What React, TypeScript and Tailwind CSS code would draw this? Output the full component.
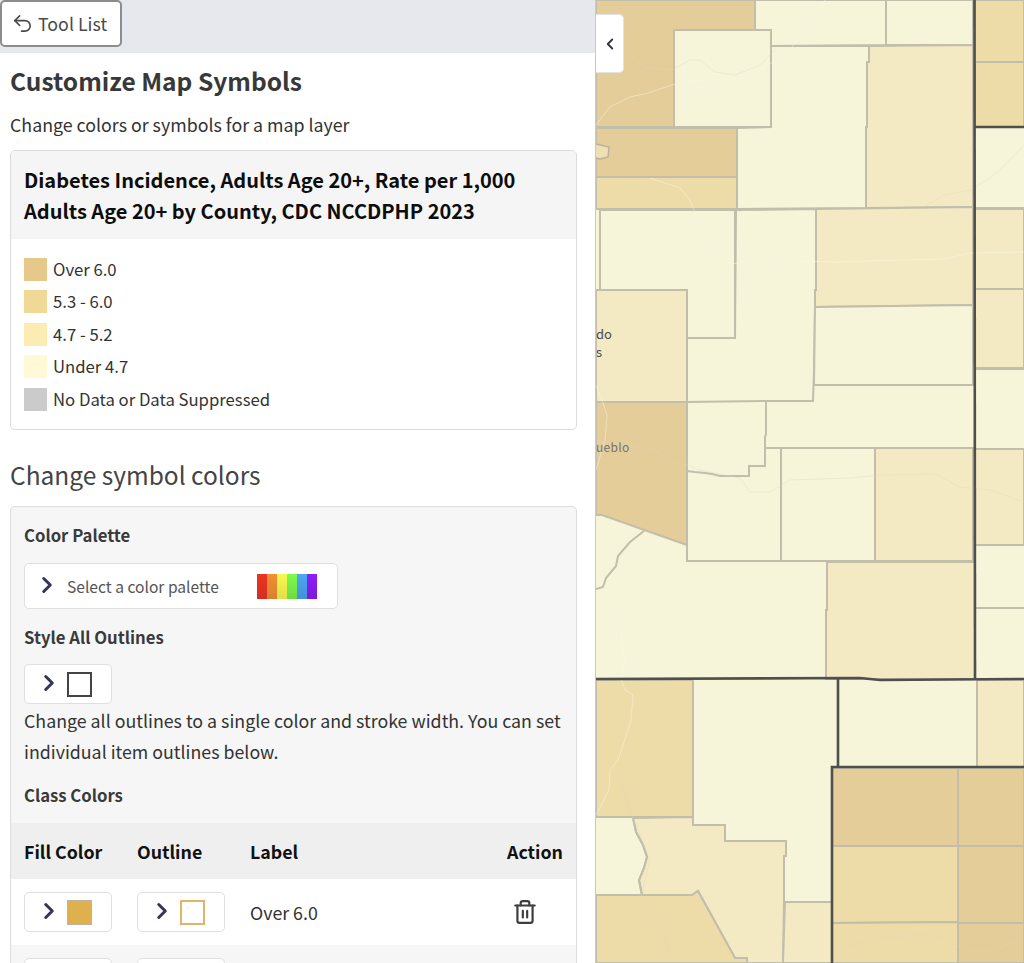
import { ChevronLeft, ChevronRight, Trash2, Undo2 } from "lucide-react";

const DARK = "#e5cd9a";
const MED = "#eddca8";
const LIGHT = "#f3eac4";
const PALE = "#f6f4d9";
const LINE = "#c2beaa";

const regions: [string, string][] = [
  [DARK, "596,0 755,0 755,30 674,30 674,127 596,127"],
  [PALE, "674,30 771,30 771,127 674,127"],
  [DARK, "596,128 737,128 737,177 596,177"],
  [MED, "596,177 737,177 737,209 596,209"],
  [PALE, "755,0 886,0 886,45 771,46 771,30 755,30"],
  [PALE, "886,0 973,0 973,45 886,45"],
  [PALE, "771,46 869,46 869,62 867,62 867,127 866,127 866,208 737,209 737,128 771,127"],
  [LIGHT, "869,46 973,45 973,207 866,208 866,127 867,127 867,62 869,62"],
  [MED, "975,0 1024,0 1024,62 975,62"],
  [MED, "975,62 1024,62 1024,127 975,127"],
  [LIGHT, "975,209 1024,209 1024,289 975,289"],
  [LIGHT, "975,289 1024,289 1024,369 975,369"],
  [LIGHT, "975,449 1024,449 1024,545 975,545"],
  [PALE, "600,210 735,210 735,338 687,338 687,290 600,290"],
  [PALE, "736,210 816,209 816,290 815,307 814,370 813,401 766,401 687,402 687,338 735,338"],
  [LIGHT, "596,290 687,290 687,402 596,402"],
  [LIGHT, "816,209 973,207 973,305 815,307 815,290 816,290"],
  [PALE, "815,307 973,305 973,385 814,385"],
  [DARK, "596,402 687,402 687,545 602,515 596,515"],
  [LIGHT, "875,448 973,448 973,561 875,561"],
  [LIGHT, "827,562 975,562 975,679 826,679 826,610 827,610"],
  [MED, "596,680 693,680 693,817 596,817"],
  [LIGHT, "977,680 1024,680 1024,767 977,767"],
  [DARK, "832,768 958,768 958,846 832,846"],
  [DARK, "958,768 1024,768 1024,846 958,846"],
  [MED, "832,846 958,846 958,922 832,923"],
  [DARK, "958,846 1024,846 1024,923 958,923"],
  [MED, "832,923 958,922 958,963 832,963"],
  [DARK, "958,923 1024,923 1024,963 958,963"],
  [LIGHT, "633,818 693,817 693,825 725,825 725,841 786,841 786,856 784,856 784,902 783,963 747,963 747,958 735,958 698,891 692,895 642,895 639,880 644,868 647,857 643,845 636,832"],
  [MED, "596,895 692,895 698,891 735,958 747,958 747,963 596,963"],
  [LIGHT, "785,902 832,902 832,963 783,963"],
];

const thin: string[] = [
  "600,209 600,290",
  "687,402 687,561 975,561",
  "766,401 766,434 765,437 765,466 749,466 749,476 720,476 712,474 705,473 695,472 687,471",
  "766,448 973,448",
  "781,448 781,561",
  "875,448 875,561",
  "644,531 630,542 618,556 616,566 606,578 603,587 596,589",
  "975,368 1024,368",
  "975,449 1024,449",
  "975,545 1024,545",
  "975,608 1024,608",
  "975,208 1024,208",
  "975,289 1024,289",
  "975,62 1024,62",
  "633,818 636,832 643,845 647,857 644,868 639,880 642,895",
];

const thickLines: string[] = [
  "974.5,0 975,679",
  "975,127 1024,127",
  "596,679 860,678 880,680 1024,679",
  "838,679 838,767",
  "832,963 832,767 1024,767",
];

const paleRoads: string[] = [
  "596,125 610,107 630,97 648,93 672,85 690,81 712,80 750,78 790,50 820,10 825,0",
  "650,178 680,188 690,200 700,225 712,245 725,262 745,265 790,261 838,262 900,260 945,259 970,253 1024,252",
  "596,590 610,610 620,630 625,660 621,679 625,690 633,695 631,720 628,730 618,760 610,770 609,790 596,815",
  "596,385 602,400 607,415 605,440 596,470",
];

const faintRoads: string[] = [
  "625,52 645,68 672,70 690,60 700,60 715,72 735,75 760,65 775,50",
  "923,207 945,195 970,190 990,178 1005,165 1024,145",
  "596,440 655,450 668,460 687,465 700,470 740,478 750,492 770,492 790,480 850,478 880,475 935,474 960,487 990,490 1024,502",
  "621,782 633,818 650,860 640,900 662,925 670,960",
  "832,963 850,945 880,938 925,935 930,933 950,942 965,950 995,950 1015,942 1024,925",
];

function MapArt() {
  return (
    <svg viewBox="596 0 428 963" className="block h-[963px] w-full">
      <rect x="596" y="0" width="428" height="963" fill={PALE} />
      {regions.map(([fill, points], i) => (
        <polygon key={i} points={points} fill={fill} stroke={LINE} strokeWidth="2" />
      ))}
      {thin.map((points, i) => (
        <polyline key={i} points={points} fill="none" stroke={LINE} strokeWidth="2" />
      ))}
      {paleRoads.map((points, i) => (
        <polyline key={i} points={points} fill="none" stroke="#fbf8e6" strokeWidth="1" opacity="0.45" />
      ))}
      {faintRoads.map((points, i) => (
        <polyline key={i} points={points} fill="none" stroke="#dcd6bb" strokeWidth="0.7" opacity="0.5" />
      ))}
      {thickLines.map((points, i) => (
        <polyline key={i} points={points} fill="none" stroke="#4f4f4d" strokeWidth="2.6" />
      ))}
      <path d="M596 144 L609 147 L608 157 L600 159 L596 158" fill="#eedfb4" stroke="#bdb09a" strokeWidth="1.4" />
      <g fontFamily="'Noto Sans CJK SC', sans-serif" fontSize="13">
        <text x="596" y="339" fill="#4a4a55">do</text>
        <text x="596" y="357" fill="#4a4a55">s</text>
        <text x="596" y="452" fontSize="12" letterSpacing="0.3" fill="#73737c">ueblo</text>
      </g>
    </svg>
  );
}

function Chevron() {
  return <ChevronRight size={26} strokeWidth={2.8} className="mb-[2px] shrink-0 text-[#35345a]" />;
}

function SwatchButton({ swatch }: { swatch: string }) {
  return (
    <div className="flex h-[40px] w-[88px] items-center gap-[5px] rounded-[5px] border border-[#dfdfdf] bg-white pl-[11px]">
      <Chevron />
      <span className={`block h-[25px] w-[25px] ${swatch}`} />
    </div>
  );
}

const legend = [
  ["Over 6.0", "bg-[#e5c88a]"],
  ["5.3 - 6.0", "bg-[#f0d896]"],
  ["4.7 - 5.2", "bg-[#fcebb3]"],
  ["Under 4.7", "bg-[#fff9d8]"],
  ["No Data or Data Suppressed", "bg-[#cbcbcb]"],
];

export default function App() {
  return (
    <div
      className="flex h-[963px] w-[1024px] overflow-hidden bg-white text-[17.8px] leading-[31px] text-[#333]"
      style={{ fontFamily: "'Noto Sans CJK SC', 'Noto Sans', sans-serif" }}
    >
      <div className="h-[963px] w-[596px] shrink-0 overflow-hidden border-r border-[#c9c9c9]">
        <div className="h-[53px] bg-[#e7e8ee]">
          <button className="flex h-[47px] w-[122px] items-center gap-[4px] rounded-[5px] border-2 border-[#8c8c8c] bg-white pl-[9px] text-[#4a4a4a]">
            <Undo2 size={23} strokeWidth={1.7} />
            <span>Tool List</span>
          </button>
        </div>
        <div className="px-[10px]">
          <h1 className="mt-[12px] text-[24.5px] leading-[32px] font-bold text-[#383838]">Customize Map Symbols</h1>
          <p className="mt-[12px] leading-[31px]">Change colors or symbols for a map layer</p>
          <section className="mt-[10px] h-[280px] w-[567px] overflow-hidden rounded-[5px] border border-[#dcdcdc]">
            <div className="h-[88px] bg-[#f5f5f5] px-[13px] pt-[13px] text-[20px] leading-[31px] font-bold text-[#0d0d0d]">
              Diabetes Incidence, Adults Age 20+, Rate per 1,000
              <br />
              Adults Age 20+ by County, CDC NCCDPHP 2023
            </div>
            <ul className="flex flex-col gap-[9.6px] px-[13px] pt-[18.5px] text-[16.7px]">
              {legend.map(([label, color]) => (
                <li key={label} className="flex h-[23px] items-center gap-[6px] leading-[23px]">
                  <span className={`block h-[23px] w-[23px] ${color}`} />
                  <span>{label}</span>
                </li>
              ))}
            </ul>
          </section>
          <h2 className="mt-[27px] text-[24.5px] leading-[35px] font-normal text-[#444]">Change symbol colors</h2>
          <section className="mt-[14px] h-[600px] w-[567px] rounded-[5px] border border-[#dcdcdc] bg-[#f6f6f6]">
            <div className="px-[13px]">
              <h3 className="mt-[13px] text-[16.7px] leading-[31px] font-bold text-[#3a3a3a]">Color Palette</h3>
              <div className="mt-[12px] flex h-[46px] w-[314px] items-center rounded-[5px] border border-[#dfdfdf] bg-white pl-[9px]">
                <Chevron />
                <span className="ml-[7px] w-[190px] text-[15.6px] text-[#555]">Select a color palette</span>
                <div className="flex h-[25px] w-[60px]">
                  <span className="h-full w-[10px] bg-gradient-to-b from-[#ee3322] to-[#d42e1f]" />
                  <span className="h-full w-[10px] bg-gradient-to-b from-[#f28f30] to-[#d88030]" />
                  <span className="h-full w-[10px] bg-gradient-to-b from-[#f7f94e] to-[#dfdf48]" />
                  <span className="h-full w-[10px] bg-gradient-to-b from-[#7dfb4c] to-[#6ddb42]" />
                  <span className="h-full w-[10px] bg-gradient-to-b from-[#4ea6f5] to-[#4290d8]" />
                  <span className="h-full w-[10px] bg-gradient-to-b from-[#8d1ff5] to-[#7d18dc]" />
                </div>
              </div>
              <h3 className="mt-[13px] text-[16.7px] leading-[31px] font-bold text-[#3a3a3a]">Style All Outlines</h3>
              <div className="mt-[11px]">
                <SwatchButton swatch="border-2 border-[#444] bg-white" />
              </div>
              <p className="mt-[1px] w-[545px]">Change all outlines to a single color and stroke width. You can set individual item outlines below.</p>
              <h3 className="mt-[13px] text-[16.7px] leading-[31px] font-bold text-[#3a3a3a]">Class Colors</h3>
            </div>
            <div className="mt-[12px] grid h-[56px] grid-cols-[113px_113px_1fr_auto] items-center bg-[#efefef] px-[13px] font-bold text-[#111]">
              <span>Fill Color</span>
              <span>Outline</span>
              <span>Label</span>
              <span>Action</span>
            </div>
            <div className="grid h-[66px] grid-cols-[113px_113px_1fr_50px] items-center bg-white px-[13px]">
              <SwatchButton swatch="border border-[#b9b4a6] bg-[#dfb04e]" />
              <SwatchButton swatch="border-2 border-[#dfb56a] bg-white" />
              <span>Over 6.0</span>
              <Trash2 size={26} strokeWidth={2} className="-ml-[1px] text-[#3d3d3d]" />
            </div>
            <div className="grid grid-cols-[113px_113px_1fr_50px] items-center px-[13px] pt-[13px]">
              <SwatchButton swatch="border border-[#b9b4a6] bg-[#f0d896]" />
              <SwatchButton swatch="border-2 border-[#f0d896] bg-white" />
            </div>
          </section>
        </div>
      </div>
      <div className="relative min-w-0 flex-1">
        <MapArt />
        <button className="absolute top-[14px] left-0 flex h-[59px] w-[28px] items-center justify-center rounded-r-[5px] border border-l-0 border-[#e3e3e3] bg-white text-[#333]">
          <ChevronLeft size={18} strokeWidth={2.4} />
        </button>
      </div>
    </div>
  );
}
